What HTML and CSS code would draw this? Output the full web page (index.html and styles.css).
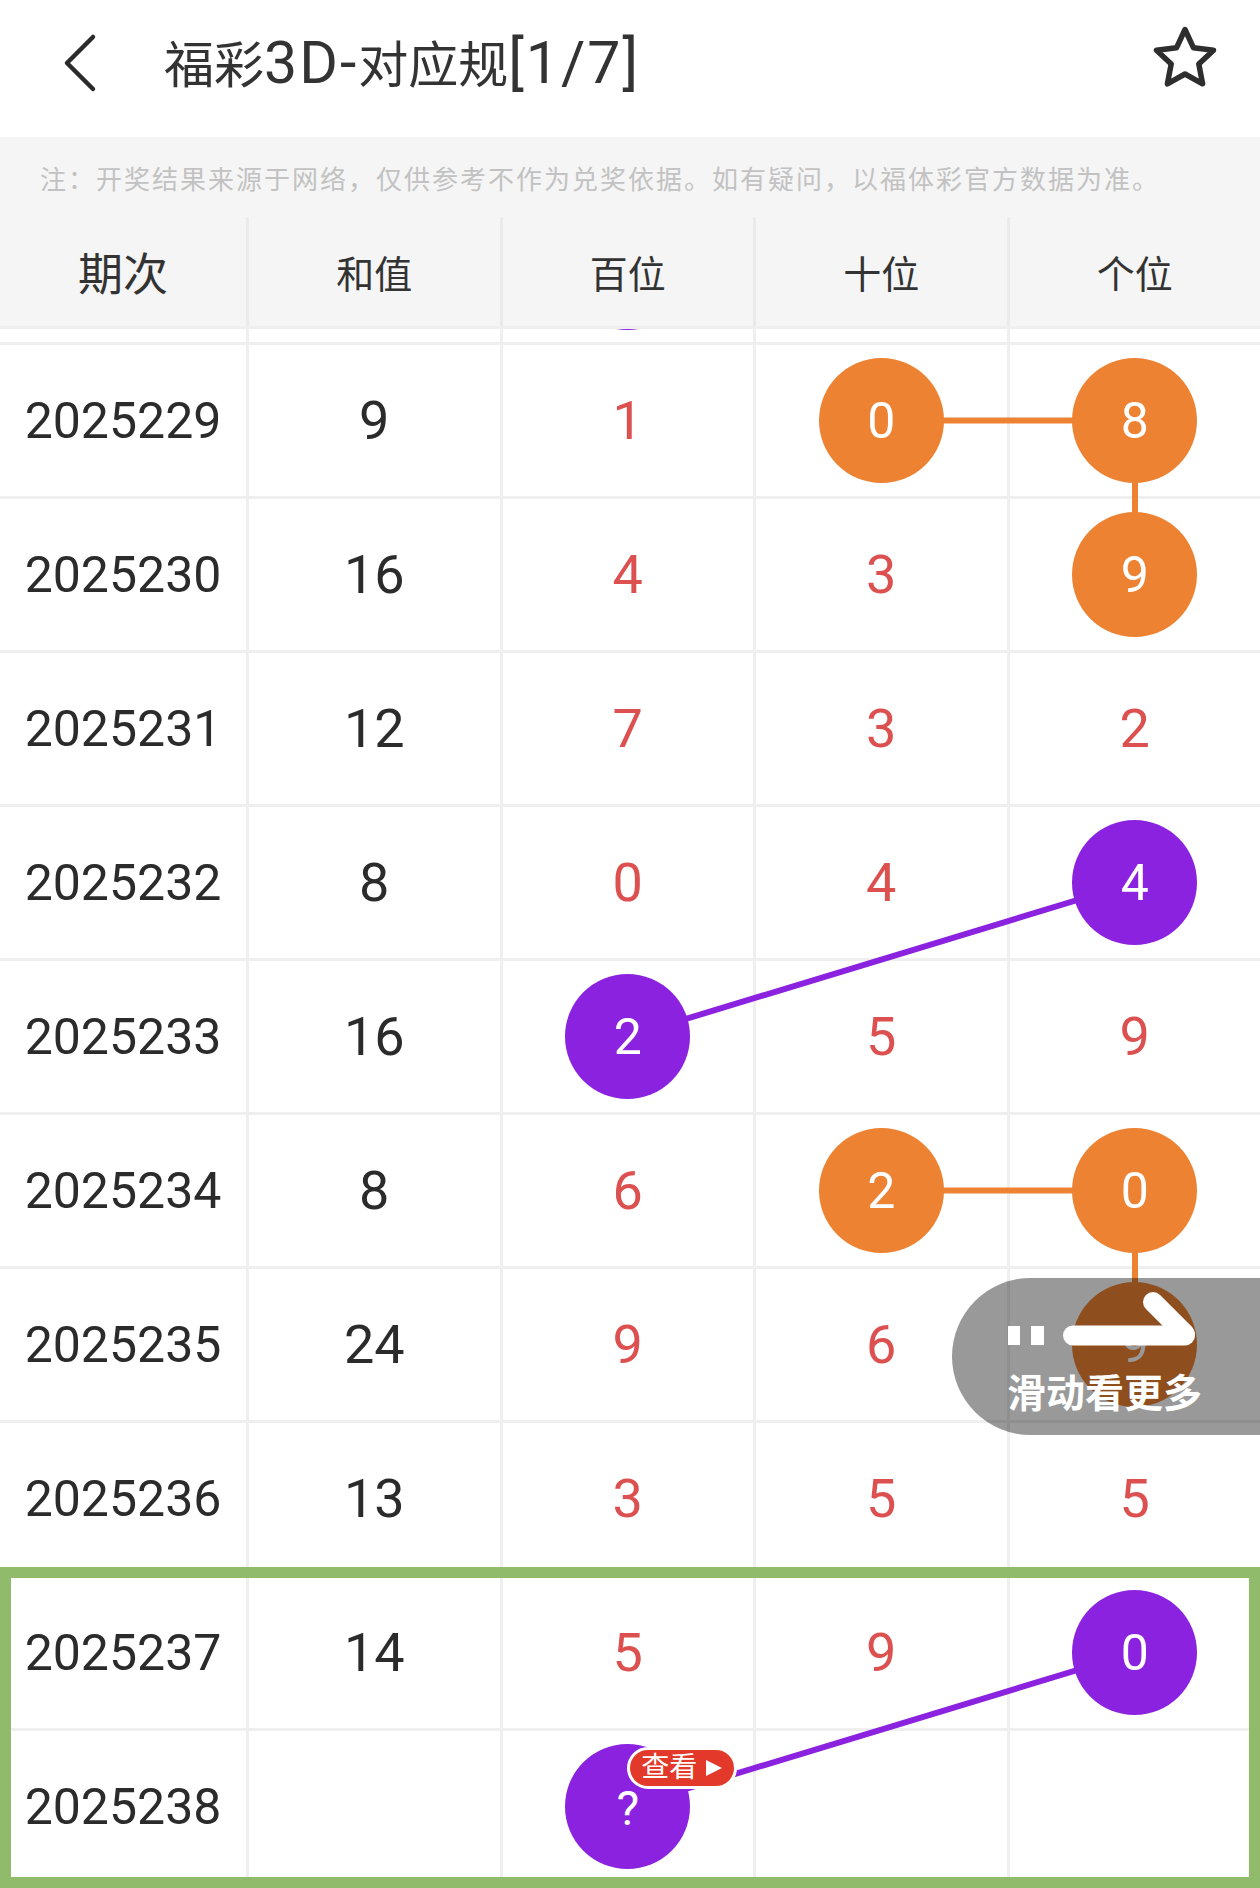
FILE: index.html
```html
<!DOCTYPE html>
<html lang="zh-CN">
<head>
  <meta charset="UTF-8">
  <meta name="viewport" content="width=device-width, initial-scale=1.0">
  <title>福彩3D-对应规</title>
  <link rel="stylesheet" href="styles.css">
</head>
<body>
  <header class="topbar">
    <svg class="back" width="40" height="60" viewBox="0 0 40 60">
      <polyline points="33,4 7,30 33,56" />
    </svg>
    <h1 class="title">福彩<span class="latin">3D-</span>对应规<span class="latin">[1/7]</span></h1>
    <svg class="star" width="64" height="64" viewBox="0 0 64 64">
      <polygon points="32,3.5 40.5,21.8 60.5,24.2 45.8,38 49.6,57.8 32,48 14.4,57.8 18.2,38 3.5,24.2 23.5,21.8" />
    </svg>
  </header>

  <p class="note">注：开奖结果来源于网络，仅供参考不作为兑奖依据。如有疑问，以福体彩官方数据为准。</p>

  <div class="table">
    <div class="thead">
      <div class="th th-issue">期次</div>
      <div class="th">和值</div>
      <div class="th">百位</div>
      <div class="th">十位</div>
      <div class="th">个位</div>
    </div>

    <div class="scroll">
      <div class="rows">
        <!-- 连线：坐标按行高154、列中心计算 -->
        <svg class="links">
          <line class="orange-line" x1="881" y1="229.5" x2="1135" y2="229.5" />
          <line class="orange-line" x1="1135" y1="229.5" x2="1135" y2="383.5" />
          <line class="purple-line" x1="628" y1="845.5" x2="1135" y2="691.5" />
          <line class="orange-line" x1="881" y1="999.5" x2="1135" y2="999.5" />
          <line class="orange-line" x1="1135" y1="999.5" x2="1135" y2="1153.5" />
          <line class="purple-line" x1="628" y1="1615.5" x2="1135" y2="1461.5" />
        </svg>

        <!-- 已滚出可视区的上一期，只露出底边 -->
        <div class="row row-first">
          <div class="cell issue"></div>
          <div class="cell sum"></div>
          <div class="cell num"><span class="ball purple ball-low"></span></div>
          <div class="cell num"></div>
          <div class="cell num"></div>
        </div>
        <div class="row">
          <div class="cell issue">2025229</div>
          <div class="cell sum">9</div>
          <div class="cell num">1</div>
          <div class="cell num"><span class="ball orange">0</span></div>
          <div class="cell num"><span class="ball orange">8</span></div>
        </div>
        <div class="row">
          <div class="cell issue">2025230</div>
          <div class="cell sum">16</div>
          <div class="cell num">4</div>
          <div class="cell num">3</div>
          <div class="cell num"><span class="ball orange">9</span></div>
        </div>
        <div class="row">
          <div class="cell issue">2025231</div>
          <div class="cell sum">12</div>
          <div class="cell num">7</div>
          <div class="cell num">3</div>
          <div class="cell num">2</div>
        </div>
        <div class="row">
          <div class="cell issue">2025232</div>
          <div class="cell sum">8</div>
          <div class="cell num">0</div>
          <div class="cell num">4</div>
          <div class="cell num"><span class="ball purple">4</span></div>
        </div>
        <div class="row">
          <div class="cell issue">2025233</div>
          <div class="cell sum">16</div>
          <div class="cell num"><span class="ball purple">2</span></div>
          <div class="cell num">5</div>
          <div class="cell num">9</div>
        </div>
        <div class="row">
          <div class="cell issue">2025234</div>
          <div class="cell sum">8</div>
          <div class="cell num">6</div>
          <div class="cell num"><span class="ball orange">2</span></div>
          <div class="cell num"><span class="ball orange">0</span></div>
        </div>
        <div class="row">
          <div class="cell issue">2025235</div>
          <div class="cell sum">24</div>
          <div class="cell num">9</div>
          <div class="cell num">6</div>
          <div class="cell num"><span class="ball orange">9</span></div>
        </div>
        <div class="row">
          <div class="cell issue">2025236</div>
          <div class="cell sum">13</div>
          <div class="cell num">3</div>
          <div class="cell num">5</div>
          <div class="cell num">5</div>
        </div>

        <div class="latest">
          <div class="row">
            <div class="cell issue">2025237</div>
            <div class="cell sum">14</div>
            <div class="cell num">5</div>
            <div class="cell num">9</div>
            <div class="cell num"><span class="ball purple">0</span></div>
          </div>
          <div class="row">
            <div class="cell issue">2025238</div>
            <div class="cell sum"></div>
            <div class="cell num">
              <span class="ball purple ball-next">?
                <span class="badge">查看<i class="play"></i></span>
              </span>
            </div>
            <div class="cell num"></div>
            <div class="cell num"></div>
          </div>
        </div>
      </div>

      <div class="swipe-hint">
        <svg class="swipe-arrow" width="190" height="56" viewBox="0 0 190 56">
          <rect x="1" y="36" width="12" height="19" />
          <rect x="24" y="36" width="13" height="19" />
          <line x1="66" y1="45.5" x2="178" y2="45.5" />
          <line x1="146" y1="12" x2="178" y2="44" />
        </svg>
        <span class="swipe-text">滑动看更多</span>
      </div>
    </div>
  </div>
</body>
</html>
```

FILE: styles.css
```css
*{
  margin: 0;
  padding: 0;
  box-sizing: border-box;
}
body{
  width: 1260px;
  height: 1888px;
  overflow: hidden;
  background: #fff;
  color: #333;
  font-family: Roboto, "Noto Sans CJK SC", sans-serif;
}

/* 顶部导航 */
.topbar{
  display: flex;
  align-items: center;
  height: 137px;
  padding: 0 43px 12px 60px;
  background: #fff;
}
.back polyline{
  fill: none;
  stroke: #2b2b2b;
  stroke-width: 4.5;
  stroke-linecap: round;
  stroke-linejoin: round;
}
.title{
  margin-left: 64px;
  font-size: 50px;
  font-weight: 400;
  color: #333;
  line-height: 1;
}
.title .latin{
  font-size: 59px;
  letter-spacing: 2px;
}
.star{
  margin-left: auto;
  align-self: flex-start;
  margin-top: 26px;
}
.star polygon{
  fill: none;
  stroke: #2e2e2e;
  stroke-width: 5.5;
  stroke-linejoin: round;
}

.note{
  height: 80px;
  padding-left: 40px;
  display: flex;
  align-items: center;
  background: #f5f5f5;
  color: #c2c2c2;
  font-size: 26px;
  letter-spacing: 2px;
}

/* 表格 */
.table{
  background: #efefef;
}
.thead,
.row{
  display: grid;
  grid-template-columns: 246px repeat(4, 1fr);
  column-gap: 3px;
}
.thead{
  height: 109px;
  margin-bottom: 3px;
  background: #ebebeb;
}
.th{
  display: flex;
  align-items: center;
  justify-content: center;
  background: #f5f5f5;
  font-size: 38px;
  color: #333;
}
.th-issue{
  font-size: 45px;
}

.scroll{
  position: relative;
  height: 1559px;
  overflow: hidden;
}
.rows{
  position: relative;
  display: flex;
  flex-direction: column;
  gap: 3px;
}
.row{
  height: 151px;
}
/* 列表已向上滚动，第一行只露出底部 */
.row-first{
  margin-top: -138px;
}
.cell{
  display: flex;
  align-items: center;
  justify-content: center;
  background: #fff;
  font-size: 54px;
}
.issue{
  font-size: 50px;
  color: #2b2b2b;
}
.sum{
  color: #2b2b2b;
}
.num{
  color: #dc5050;
}

.links{
  position: absolute;
  top: -138px;
  left: 0;
  width: 100%;
  height: 100%;
  overflow: visible;
  z-index: 1;
  pointer-events: none;
}
.links line{
  stroke-width: 6;
}
.orange-line{
  stroke: #ed8233;
}
.purple-line{
  stroke: #8a22e0;
}

.ball{
  --size: 125px;
  position: relative;
  z-index: 2;
  display: flex;
  align-items: center;
  justify-content: center;
  width: var(--size);
  height: var(--size);
  border-radius: 50%;
  color: #fff;
  font-size: 50px;
}
.orange{
  background: #ed8233;
}
.purple{
  background: #8a22e0;
}
.ball-low{
  margin-top: 2px;
}
.ball-next{
  font-size: 48px;
  padding-top: 4px;
}

.badge{
  position: absolute;
  left: 62px;
  top: 3px;
  display: flex;
  align-items: center;
  gap: 9px;
  height: 42px;
  padding: 0 12px 0 11px;
  border: 3px solid #fff;
  border-radius: 21px;
  background: #e3392a;
  color: #fff;
  font-size: 28px;
  line-height: 1;
  white-space: nowrap;
}
.play{
  width: 0;
  height: 0;
  border-left: 16px solid #fff;
  border-top: 8.5px solid transparent;
  border-bottom: 8.5px solid transparent;
}

.latest{
  position: relative;
  display: flex;
  flex-direction: column;
  gap: 3px;
}
.latest::after{
  content: '';
  position: absolute;
  top: -10px;
  bottom: -6px;
  left: 0;
  right: 0;
  z-index: 3;
  border: 11px solid #8fbb6a;
  pointer-events: none;
}

/* 滑动提示 */
.swipe-hint{
  position: absolute;
  top: 949px;
  right: 0;
  z-index: 5;
  display: flex;
  flex-direction: column;
  width: 308px;
  height: 157px;
  padding: 12px 0 0 55px;
  border-radius: 78.5px 0 0 78.5px;
  background: rgba(0, 0, 0, .4);
}
.swipe-arrow rect{
  fill: #fff;
}
.swipe-arrow line{
  stroke: #fff;
  stroke-width: 20;
  stroke-linecap: round;
}
.swipe-text{
  margin-top: 22px;
  font-size: 39px;
  font-weight: 700;
  line-height: 44px;
  color: #fff;
  font-family: "Noto Sans CJK SC", sans-serif;
}
```
